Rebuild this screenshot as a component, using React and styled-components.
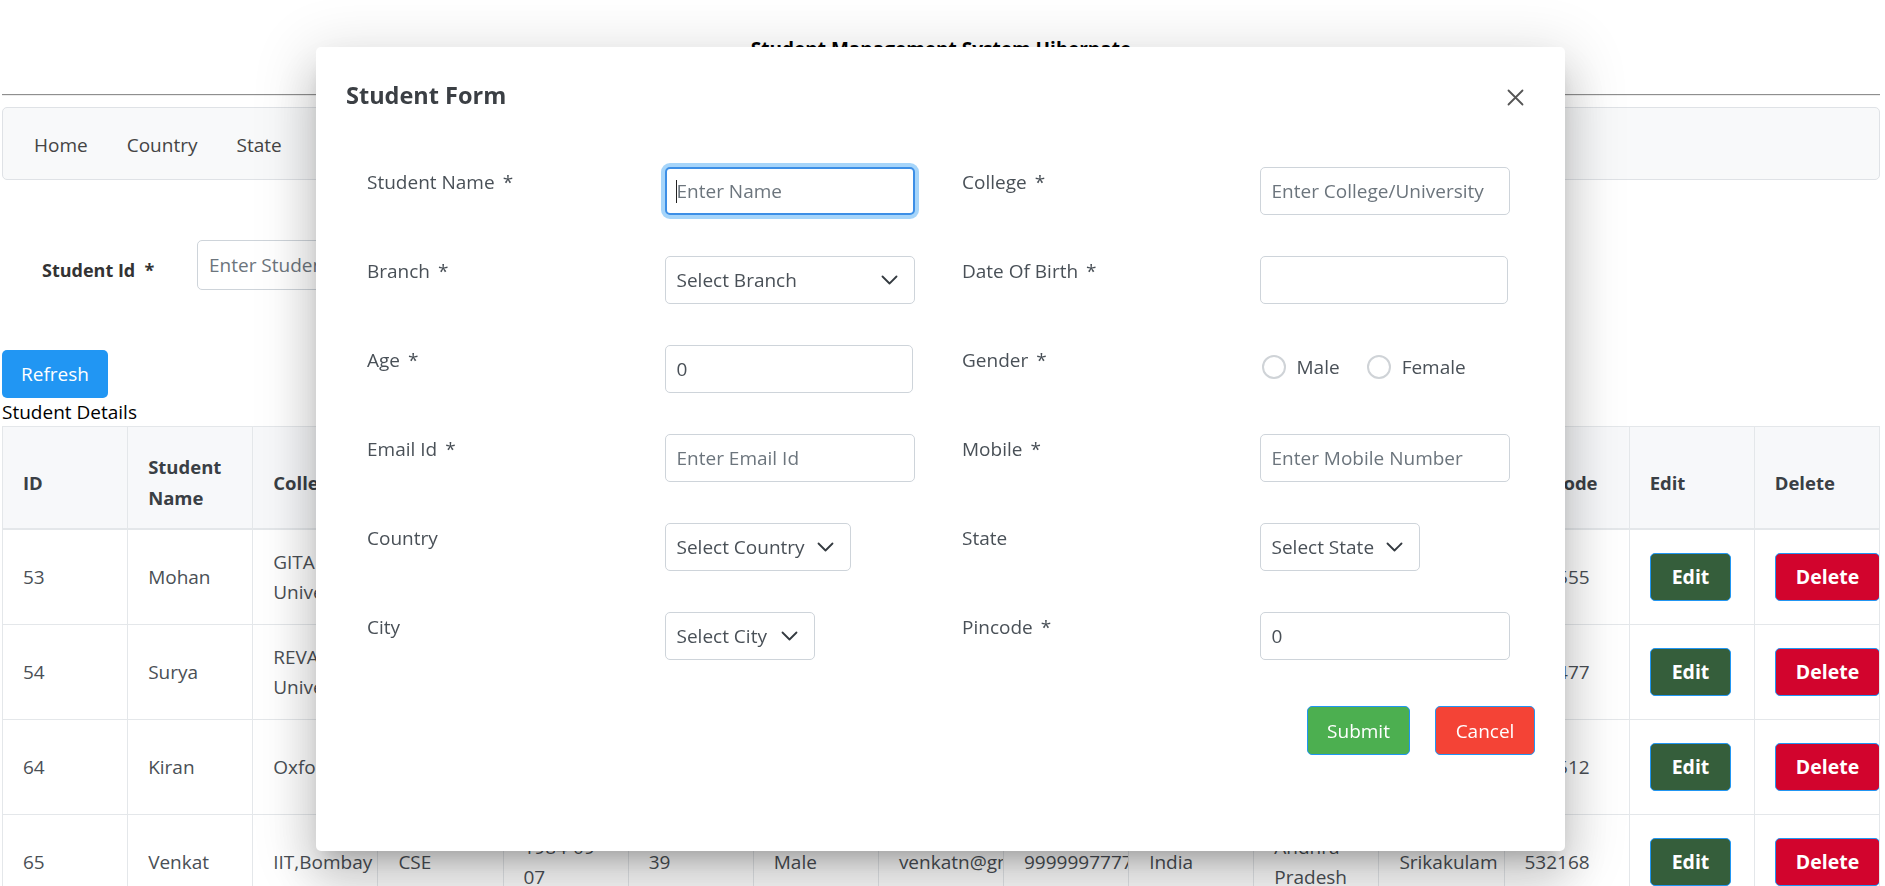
import React from "react";
import styled, { createGlobalStyle } from "styled-components";

const GlobalStyle = createGlobalStyle`
  html, body { margin: 0; padding: 0; background: #fff; overflow: hidden; }
  body {
    font-family: "Open Sans", "Noto Sans", "Liberation Sans", sans-serif;
    font-size: 19px;
    color: #212529;
  }
  * { box-sizing: border-box; }
`;

const Page = styled.div`
  padding: 0 5px 0 2px;
  height: 886px;
  overflow: hidden;
`;

const PageTitle = styled.div`
  padding-top: 37px;
  text-align: center;
  font-weight: 700;
  font-size: 19px;
  line-height: 24px;
  color: #000;
`;

const Rule = styled.hr`
  margin: 33px 0 11px;
  height: 0;
  border: 0;
  border-top: 1px solid #8f8f8f;
  border-bottom: 1px solid #ececec;
`;

const NavBar = styled.nav`
  height: 73px;
  display: flex;
  align-items: center;
  gap: 39px;
  padding: 3px 0 0 31px;
  background: #f8f9fa;
  border: 1px solid #dfe2e6;
  border-radius: 5px;
`;

const NavLink = styled.a`
  font-size: 19px;
  line-height: 28px;
  color: #444;
  text-decoration: none;
`;

const SearchRow = styled.div`
  margin-top: 60px;
  height: 50px;
  display: flex;
  align-items: center;
  padding-left: 40px;
`;

const SearchLabel = styled.label`
  width: 155px;
  padding-top: 9px;
  font-weight: 700;
  font-size: 18px;
  color: #333;
`;

const SearchInput = styled.input`
  width: 300px;
  height: 50px;
  border: 1px solid #ced4da;
  border-radius: 5px;
  padding: 0 11px;
  font: inherit;
  color: #495057;
  &::placeholder { color: #6c757d; }
`;

const RefreshButton = styled.button`
  margin-top: 60px;
  display: block;
  width: 106px;
  height: 48px;
  border: 0;
  border-radius: 5px;
  background: #2196f3;
  color: #fff;
  font: inherit;
  font-size: 19px;
`;

const SectionCaption = styled.div`
  line-height: 28px;
  font-size: 19px;
  color: #000;
`;

const Table = styled.table`
  width: 100%;
  table-layout: fixed;
  border-collapse: collapse;
  border: 1px solid #dee2e6;
`;

const Th = styled.th`
  padding: 24px 20px 15px;
  background: #f7f8fa;
  border: 1px solid #e4e7ea;
  border-bottom: 2px solid #e4e7ea;
  text-align: left;
  font-weight: 700;
  font-size: 18.5px;
  line-height: 31px;
  color: #3a3f45;
  overflow: hidden;
`;

const Td = styled.td`
  padding: 17px 20px;
  border: 1px solid #e4e7ea;
  vertical-align: middle;
  font-size: 19px;
  line-height: 30px;
  color: #4a4f55;
  overflow: hidden;
`;

const RowButton = styled.button`
  height: 48px;
  padding: 0 ${(p) => p.$pad}px;
  border: 1px solid #2196f3;
  border-radius: 5px;
  background: ${(p) => p.$bg};
  color: #fff;
  font: inherit;
  font-weight: 700;
  font-size: 19.5px;
  white-space: nowrap;
`;

/* ---------- modal ---------- */

const Overlay = styled.div`
  position: fixed;
  inset: 0;
  display: flex;
  align-items: flex-start;
  padding: 47px 0 0 316px;
`;

const Paper = styled.div`
  width: 1249px;
  height: 804px;
  background: #fff;
  border-radius: 5px;
  box-shadow: 0 14px 19px -9px rgba(0, 0, 0, 0.2),
    0 30px 48px 4px rgba(0, 0, 0, 0.14), 0 11px 58px 10px rgba(0, 0, 0, 0.12);
  display: flex;
  flex-direction: column;
`;

const DialogHeader = styled.div`
  display: flex;
  align-items: center;
  justify-content: space-between;
  padding: 29px 41px 0 30px;
`;

const DialogTitle = styled.h2`
  margin: 0;
  font-size: 23.5px;
  font-weight: 700;
  line-height: 38px;
  color: #3b3f44;
`;

const CloseButton = styled.button`
  margin-top: 4px;
  padding: 0;
  border: 0;
  background: none;
  display: flex;
  width: 17px;
  height: 17px;
`;

const FormGrid = styled.div`
  margin-top: 53px;
  padding: 0 8px 0 51px;
  display: grid;
  grid-template-columns: repeat(4, 1fr);
  grid-auto-rows: 48px;
  row-gap: 41px;
`;

const FieldLabel = styled.label`
  padding-top: 1px;
  font-size: 19px;
  line-height: 29px;
  color: #495057;
`;

const Req = styled.span`
  margin-left: 8px;
`;

const FieldWrap = styled.div`
  position: relative;
  width: ${(p) => p.$w || 250}px;
  &::after {
    content: ${(p) => (p.$caret ? '""' : "none")};
    position: absolute;
    left: 11px;
    top: 13px;
    width: 1px;
    height: 23px;
    background: #222;
  }
`;

const TextInput = styled.input`
  width: 100%;
  height: 48px;
  border: ${(p) => (p.$focused ? "2px solid #3d8fe6" : "1px solid #ced4da")};
  border-radius: 5px;
  padding: 0 ${(p) => (p.$focused ? 10 : 11)}px;
  box-shadow: ${(p) =>
    p.$focused ? "0 0 0 4px rgba(33,150,243,0.4)" : "none"};
  outline: none;
  font: inherit;
  font-size: 19px;
  color: #495057;
  background: #fff;
  &::placeholder { color: #6c757d; }
`;

const SelectBox = styled.div`
  width: ${(p) => p.$w}px;
  height: 48px;
  display: flex;
  align-items: center;
  justify-content: space-between;
  padding: 0 16px 0 11px;
  border: 1px solid #ced4da;
  border-radius: 5px;
  font-size: 19px;
  color: #495057;
  white-space: nowrap;
`;

const RadioGroup = styled.div`
  height: 44px;
  display: flex;
  align-items: center;
  padding-left: 2px;
`;

const RadioOption = styled.label`
  display: flex;
  align-items: center;
  margin-right: 27px;
  font-size: 19px;
  color: #495057;
`;

const RadioCircle = styled.span`
  width: 24px;
  height: 24px;
  margin-right: 11px;
  border: 2px solid #cfd3d7;
  border-radius: 50%;
`;

const Actions = styled.div`
  margin-top: 46px;
  padding-right: 30px;
  display: flex;
  justify-content: flex-end;
  gap: 25px;
`;

const ActionButton = styled.button`
  width: ${(p) => p.$w}px;
  height: 49px;
  border: 1px solid #2196f3;
  border-radius: 5px;
  background: ${(p) => p.$bg};
  color: #fff;
  font: inherit;
  font-size: 19px;
`;

const Chevron = () => (
  <svg width="17" height="10" viewBox="0 0 17 10" fill="none">
    <path d="M1.5 1.5l7 7 7-7" stroke="#343a40" strokeWidth="1.8" strokeLinecap="round" strokeLinejoin="round" />
  </svg>
);

const CloseIcon = () => (
  <svg width="17" height="17" viewBox="0 0 17 17" fill="none">
    <path d="M1.5 1.5l14 14M15.5 1.5l-14 14" stroke="#555" strokeWidth="1.8" strokeLinecap="round" />
  </svg>
);

const headers = [
  "ID", "Student Name", "College", "Branch", "Date Of Birth", "Age", "Gender",
  "Email", "Mobile", "Country", "State", "City", "Pincode", "Edit", "Delete",
];

const rows = [
  { id: 53, name: "Mohan", college: "GITA University", branch: "CSE", dob: "1998-05-12", age: 26, gender: "Male", email: "mohan@gmail.com", mobile: "9876543210", country: "India", state: "Odisha", city: "Bhubaneswar", pin: "530555" },
  { id: 54, name: "Surya", college: "REVA University", branch: "ECE", dob: "1999-02-21", age: 25, gender: "Male", email: "surya@gmail.com", mobile: "9123456780", country: "India", state: "Karnataka", city: "Bangalore", pin: "560477" },
  { id: 64, name: "Kiran", college: "Oxford", branch: "MECH", dob: "1997-11-03", age: 27, gender: "Male", email: "kiran@gmail.com", mobile: "9988776655", country: "India", state: "Telangana", city: "Hyderabad", pin: "500512" },
  { id: 65, name: "Venkat", college: "IIT,Bombay", branch: "CSE", dob: "1984-09-07", age: 39, gender: "Male", email: "venkatn@gmail.com", mobile: "9999997777", country: "India", state: "Andhra Pradesh", city: "Srikakulam", pin: "532168" },
];

const Label = ({ children, req }) => (
  <FieldLabel>
    {children}
    {req && <Req>*</Req>}
  </FieldLabel>
);

export default function App() {
  return (
    <>
      <GlobalStyle />
      <Page>
        <PageTitle>Student Management System Hibernate</PageTitle>
        <Rule />
        <NavBar>
          <NavLink>Home</NavLink>
          <NavLink>Country</NavLink>
          <NavLink>State</NavLink>
          <NavLink>City</NavLink>
        </NavBar>
        <SearchRow>
          <SearchLabel>Student Id&nbsp; *</SearchLabel>
          <SearchInput placeholder="Enter Student Id" />
        </SearchRow>
        <RefreshButton>Refresh</RefreshButton>
        <SectionCaption>Student Details</SectionCaption>
        <Table>
          <thead>
            <tr>
              {headers.map((h) => (
                <Th key={h}>{h}</Th>
              ))}
            </tr>
          </thead>
          <tbody>
            {rows.map((r) => (
              <tr key={r.id}>
                <Td>{r.id}</Td>
                <Td>{r.name}</Td>
                <Td>{r.college}</Td>
                <Td>{r.branch}</Td>
                <Td>{r.dob}</Td>
                <Td>{r.age}</Td>
                <Td>{r.gender}</Td>
                <Td>{r.email}</Td>
                <Td>{r.mobile}</Td>
                <Td>{r.country}</Td>
                <Td>{r.state}</Td>
                <Td>{r.city}</Td>
                <Td>{r.pin}</Td>
                <Td>
                  <RowButton $bg="#355e3b" $pad={21}>Edit</RowButton>
                </Td>
                <Td>
                  <RowButton $bg="#d2042d" $pad={20}>Delete</RowButton>
                </Td>
              </tr>
            ))}
          </tbody>
        </Table>
      </Page>

      <Overlay>
        <Paper>
          <DialogHeader>
            <DialogTitle>Student Form</DialogTitle>
            <CloseButton aria-label="close">
              <CloseIcon />
            </CloseButton>
          </DialogHeader>
          <FormGrid>
            <Label req>Student Name</Label>
            <FieldWrap $caret>
              <TextInput $focused placeholder="Enter Name" />
            </FieldWrap>
            <Label req>College</Label>
            <FieldWrap>
              <TextInput placeholder="Enter College/University" />
            </FieldWrap>

            <Label req>Branch</Label>
            <SelectBox $w={250}>
              Select Branch <Chevron />
            </SelectBox>
            <Label req>Date Of Birth</Label>
            <FieldWrap $w={248}>
              <TextInput />
            </FieldWrap>

            <Label req>Age</Label>
            <FieldWrap $w={248}>
              <TextInput defaultValue="0" />
            </FieldWrap>
            <Label req>Gender</Label>
            <RadioGroup>
              <RadioOption>
                <RadioCircle />
                Male
              </RadioOption>
              <RadioOption>
                <RadioCircle />
                Female
              </RadioOption>
            </RadioGroup>

            <Label req>Email Id</Label>
            <FieldWrap>
              <TextInput placeholder="Enter Email Id" />
            </FieldWrap>
            <Label req>Mobile</Label>
            <FieldWrap>
              <TextInput placeholder="Enter Mobile Number" />
            </FieldWrap>

            <Label>Country</Label>
            <SelectBox $w={186}>
              Select Country <Chevron />
            </SelectBox>
            <Label>State</Label>
            <SelectBox $w={160}>
              Select State <Chevron />
            </SelectBox>

            <Label>City</Label>
            <SelectBox $w={150}>
              Select City <Chevron />
            </SelectBox>
            <Label req>Pincode</Label>
            <FieldWrap>
              <TextInput defaultValue="0" />
            </FieldWrap>
          </FormGrid>
          <Actions>
            <ActionButton $bg="#4caf50" $w={103}>Submit</ActionButton>
            <ActionButton $bg="#f44336" $w={100}>Cancel</ActionButton>
          </Actions>
        </Paper>
      </Overlay>
    </>
  );
}
